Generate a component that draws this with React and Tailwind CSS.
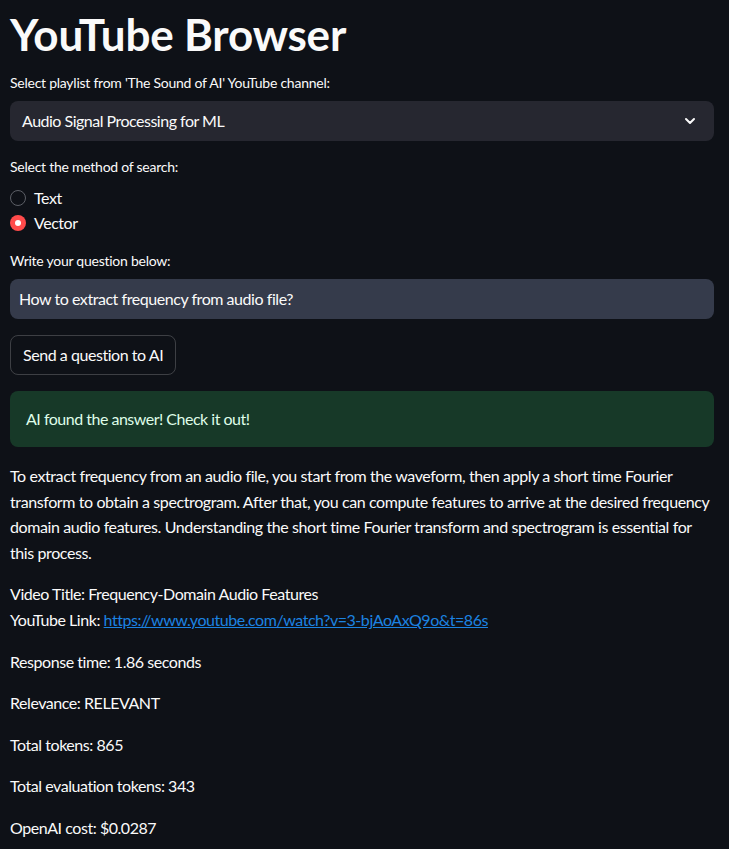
import { ChevronDown } from "lucide-react";

function Label({ children }) {
  return <p className="text-sm leading-5 tracking-[-0.25px] text-[#fafafa] mb-2">{children}</p>;
}

function Radio({ label, checked }) {
  return (
    <div className="flex items-center gap-2 h-[25px]">
      {checked ? (
        <span className="w-4 h-4 rounded-full bg-[#ff4b4b] flex items-center justify-center">
          <span className="w-1.5 h-1.5 rounded-full bg-white" />
        </span>
      ) : (
        <span className="w-4 h-4 rounded-full border border-[#5c5f66]" />
      )}
      <span className="text-base">{label}</span>
    </div>
  );
}

export default function App() {
  return (
    <div
      className="min-h-screen bg-[#0e1117] text-[#fafafa] px-[10px] pb-6 tracking-[-0.45px]"
      style={{ fontFamily: "Lato, 'Liberation Sans', sans-serif" }}
    >
      <h1 className="text-[44px] font-bold leading-none pt-[12px] pb-[17px] tracking-[-0.2px]">
        YouTube Browser
      </h1>

      <div className="flex flex-col gap-4 pr-[5px]">
        <div>
          <Label>Select playlist from 'The Sound of AI' YouTube channel:</Label>
          <div className="h-10 bg-[#262730] rounded-lg flex items-center justify-between pl-3 pr-4">
            <span className="text-base tracking-[-0.5px]">Audio Signal Processing for ML</span>
            <ChevronDown className="w-4 h-4" strokeWidth={3} />
          </div>
        </div>

        <div>
          <Label>Select the method of search:</Label>
          <Radio label="Text" />
          <Radio label="Vector" checked />
        </div>

        <div>
          <Label>Write your question below:</Label>
          <div className="h-10 bg-[#353b4b] rounded-lg flex items-center px-[9px]">
            <span className="text-base">How to extract frequency from audio file?</span>
          </div>
        </div>

        <div>
          <button className="h-10 px-3 rounded-lg border border-[#fafafa]/20 text-base">
            Send a question to AI
          </button>
        </div>

        <div className="h-14 rounded-lg bg-[#173928] text-[#dffde9] flex items-center px-4 text-base tracking-[-0.5px]">
          AI found the answer! Check it out!
        </div>

        <p className="text-base leading-[1.6] pr-[5px] tracking-[-0.4px]">
          To extract frequency from an audio file, you start from the waveform, then apply a short time Fourier
          transform to obtain a spectrogram. After that, you can compute features to arrive at the desired
          frequency domain audio features. Understanding the short time Fourier transform and spectrogram is
          essential for this process.
        </p>

        <div className="text-base leading-[1.6]">
          <p>Video Title: Frequency-Domain Audio Features</p>
          <p>
            YouTube Link:{" "}
            <a href="#" className="text-[#1c83e1] underline">
              https://www.youtube.com/watch?v=3-bjAoAxQ9o&amp;t=86s
            </a>
          </p>
        </div>

        <p className="text-base leading-[1.6]">Response time: 1.86 seconds</p>
        <p className="text-base leading-[1.6]">Relevance: RELEVANT</p>
        <p className="text-base leading-[1.6]">Total tokens: 865</p>
        <p className="text-base leading-[1.6]">Total evaluation tokens: 343</p>
        <p className="text-base leading-[1.6]">OpenAI cost: $0.0287</p>
      </div>
    </div>
  );
}
